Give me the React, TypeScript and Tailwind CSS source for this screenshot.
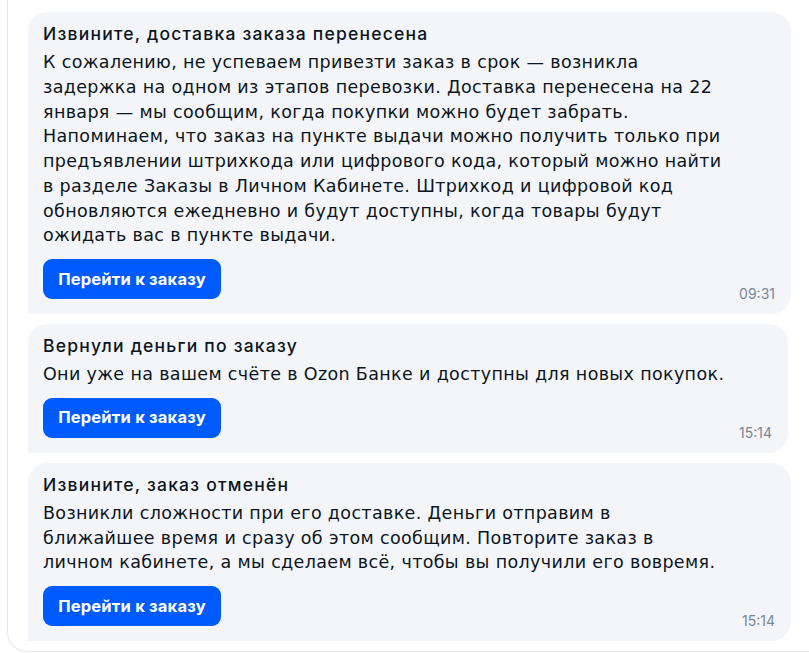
const messages = [
  {
    title: 'Извините, доставка заказа перенесена',
    lines: [
      'К сожалению, не успеваем привезти заказ в срок — возникла',
      'задержка на одном из этапов перевозки. Доставка перенесена на 22',
      'января — мы сообщим, когда покупки можно будет забрать.',
      'Напоминаем, что заказ на пункте выдачи можно получить только при',
      'предъявлении штрихкода или цифрового кода, который можно найти',
      'в разделе Заказы в Личном Кабинете. Штрихкод и цифровой код',
      'обновляются ежедневно и будут доступны, когда товары будут',
      'ожидать вас в пункте выдачи.',
    ],
    time: '09:31',
    width: 'w-[763px]',
  },
  {
    title: 'Вернули деньги по заказу',
    lines: ['Они уже на вашем счёте в Ozon Банке и доступны для новых покупок.'],
    time: '15:14',
    width: 'w-[760px]',
  },
  {
    title: 'Извините, заказ отменён',
    lines: [
      'Возникли сложности при его доставке. Деньги отправим в',
      'ближайшее время и сразу об этом сообщим. Повторите заказ в',
      'личном кабинете, а мы сделаем всё, чтобы вы получили его вовремя.',
    ],
    time: '15:14',
    width: 'w-[763px]',
  },
]

const Bubble = ({ title, lines, time, width }: (typeof messages)[number]) => {
  return (
    <article
      className={`${width} rounded-[20px] rounded-bl-none bg-[#f4f5f9] px-[15px] pt-[8px] pb-[15px] text-[#0b1521]`}
    >
      <h3 className="font-['Inter',sans-serif] text-[17.5px] leading-[27px] font-medium tracking-[0.07em]">
        {title}
      </h3>
      <p className="mt-[3px] font-['DejaVu_Sans',sans-serif] text-[17.5px] leading-[24.75px] tracking-[0.35px] whitespace-nowrap">
        {lines.map((line, index) => (
          <span key={index} className="block">
            {line}
          </span>
        ))}
      </p>
      <footer className="mt-[11px] flex items-end justify-between">
        <button className="h-[40px] w-[178px] rounded-[9px] bg-[#005bff] font-['Inter',sans-serif] text-[16.5px] font-bold tracking-[0.2px] text-white">
          Перейти к заказу
        </button>
        <span className="mr-[1px] -mb-[3px] font-['Inter',sans-serif] text-[14px] leading-[16px] text-[#7a8798]">
          {time}
        </span>
      </footer>
    </article>
  )
}

export default function App() {
  return (
    <main className="h-[653px] overflow-hidden bg-white">
      <div className="ml-[7px] flex h-[652px] flex-col gap-[10px] rounded-bl-[20px] border-b border-l border-[#e4e8ee] pt-[12px] pl-[20px]">
        {messages.map((m, index) => (
          <Bubble key={index} {...m} />
        ))}
      </div>
    </main>
  )
}
